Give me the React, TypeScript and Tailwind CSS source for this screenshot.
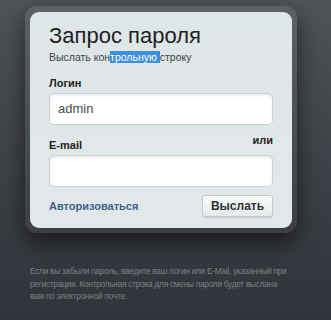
import React from "react";

export default function App() {
  return (
    <div
      className="w-[331px] h-[320px] overflow-hidden bg-gradient-to-b from-[#4f5257] via-[#3e4147] to-[#30333a] pt-[6px] px-[25px]"
      style={{ fontFamily: '"Liberation Sans", Arial, sans-serif' }}
    >
      <div className="w-[272px] rounded-[12px] bg-gradient-to-b from-[#5e6165] to-[#3c3e41] p-[5px] pt-[6px] shadow-[0_10px_22px_rgba(0,0,0,0.55)]">
        <div className="rounded-[9px] bg-gradient-to-b from-[#dfe6e8] to-[#e2e8ea] px-[19px] pt-[11px] pb-[11px]">
          <div className="text-[22px] leading-[26px] text-[#1e2224]">Запрос пароля</div>
          <div className="text-[10.5px] leading-[14px] text-[#3d4245] mt-[1px]">
            Выслать кон<span className="bg-[#3d8fe0] text-white">трольную </span>строку
          </div>
          <div className="text-[11px] leading-[14px] font-bold text-[#222] mt-[12px]">Логин</div>
          <div className="mt-[3px] h-[32px] rounded-[5px] bg-white border border-[#c9cfd2] shadow-[inset_0_2px_2px_rgba(0,0,0,0.08)] flex items-center px-[8px] text-[13px] text-[#4a4d50]">
            admin
          </div>
          <div className="flex justify-between items-end mt-[8px]">
            <div className="text-[11px] leading-[14px] font-bold text-[#222] pb-[1px]">E-mail</div>
            <div className="text-[11px] leading-[14px] font-bold text-[#222] pb-[6px]">или</div>
          </div>
          <div className="mt-[2px] h-[32px] rounded-[5px] bg-white border border-[#c9cfd2] shadow-[inset_0_2px_2px_rgba(0,0,0,0.08)]"></div>
          <div className="flex justify-between items-center mt-[8px]">
            <div className="text-[11px] font-bold text-[#3b628c]">Авторизоваться</div>
            <div className="w-[71px] h-[22px] rounded-[3px] border border-[#c4c9cc] bg-gradient-to-b from-[#fbfbfb] to-[#e6e9ea] shadow-[0_1px_1px_rgba(0,0,0,0.12)] flex items-center justify-center text-[12px] font-bold text-[#2f3335]">
              Выслать
            </div>
          </div>
        </div>
      </div>
      <div className="mt-[33px] pl-[5px] w-[268px] text-[8.2px] leading-[12.5px] tracking-[-0.2px] text-[#7d8187]">
        Если вы забыли пароль, введите ваш логин или E-Mail, указанный при регистрации. Контрольная строка для смены пароля будет выслана вам по электронной почте.
      </div>
    </div>
  );
}
